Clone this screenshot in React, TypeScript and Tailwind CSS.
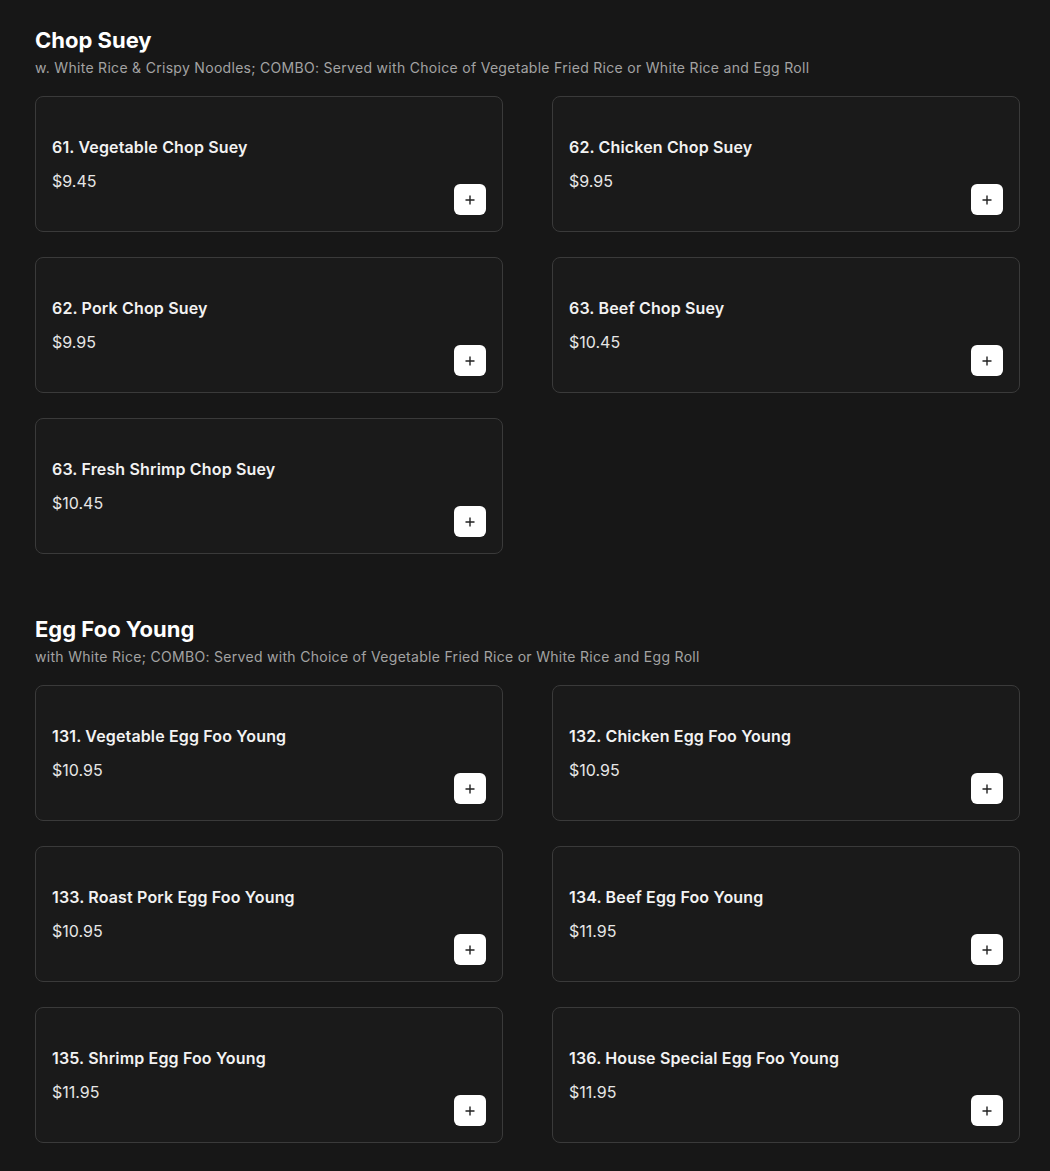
import React from "react";

type Item = { name: string; price: string };

const sections: { title: string; subtitle: string; items: Item[] }[] = [
  {
    title: "Chop Suey",
    subtitle:
      "w. White Rice & Crispy Noodles; COMBO: Served with Choice of Vegetable Fried Rice or White Rice and Egg Roll",
    items: [
      { name: "61. Vegetable Chop Suey", price: "$9.45" },
      { name: "62. Chicken Chop Suey", price: "$9.95" },
      { name: "62. Pork Chop Suey", price: "$9.95" },
      { name: "63. Beef Chop Suey", price: "$10.45" },
      { name: "63. Fresh Shrimp Chop Suey", price: "$10.45" },
    ],
  },
  {
    title: "Egg Foo Young",
    subtitle:
      "with White Rice; COMBO: Served with Choice of Vegetable Fried Rice or White Rice and Egg Roll",
    items: [
      { name: "131. Vegetable Egg Foo Young", price: "$10.95" },
      { name: "132. Chicken Egg Foo Young", price: "$10.95" },
      { name: "133. Roast Pork Egg Foo Young", price: "$10.95" },
      { name: "134. Beef Egg Foo Young", price: "$11.95" },
      { name: "135. Shrimp Egg Foo Young", price: "$11.95" },
      { name: "136. House Special Egg Foo Young", price: "$11.95" },
    ],
  },
];

function Card({ item }: { item: Item }) {
  return (
    <div className="flex h-[136px] items-end justify-between rounded-lg border border-[#3a3a3a] bg-[#1a1a1a] px-4 pb-4">
      <div className="self-start pt-[38px]">
        <div className="text-[16px] font-semibold leading-6 tracking-[0.15px] text-[#f2f2f2]">{item.name}</div>
        <div className="mt-[10px] text-[16px] font-normal leading-6 text-[#e6e6e6]">{item.price}</div>
      </div>
      <button className="flex h-[31px] w-8 items-center justify-center rounded-md bg-white">
        <svg width="10" height="10" viewBox="0 0 10 10" fill="none">
          <path d="M5 0.5V9.5M0.5 5H9.5" stroke="#222" strokeWidth="1.4" />
        </svg>
      </button>
    </div>
  );
}

export default function App() {
  return (
    <div
      className="min-h-[1171px] bg-[#171717] px-[35px] pt-[26px] pb-[29px]"
      style={{ fontFamily: "Inter, 'Noto Sans', sans-serif" }}
    >
      <div className="flex w-[985px] flex-col gap-[61px]">
        {sections.map((s) => (
          <section key={s.title}>
            <h2 className="text-[22px] font-bold leading-7 text-white">{s.title}</h2>
            <p className="mt-1 text-[14px] leading-5 tracking-[0.3px] text-[#a3a3a3]">{s.subtitle}</p>
            <div className="mt-[18px] grid grid-cols-2 gap-x-[49px] gap-y-[25px]">
              {s.items.map((it) => (
                <Card key={it.name} item={it} />
              ))}
            </div>
          </section>
        ))}
      </div>
    </div>
  );
}
